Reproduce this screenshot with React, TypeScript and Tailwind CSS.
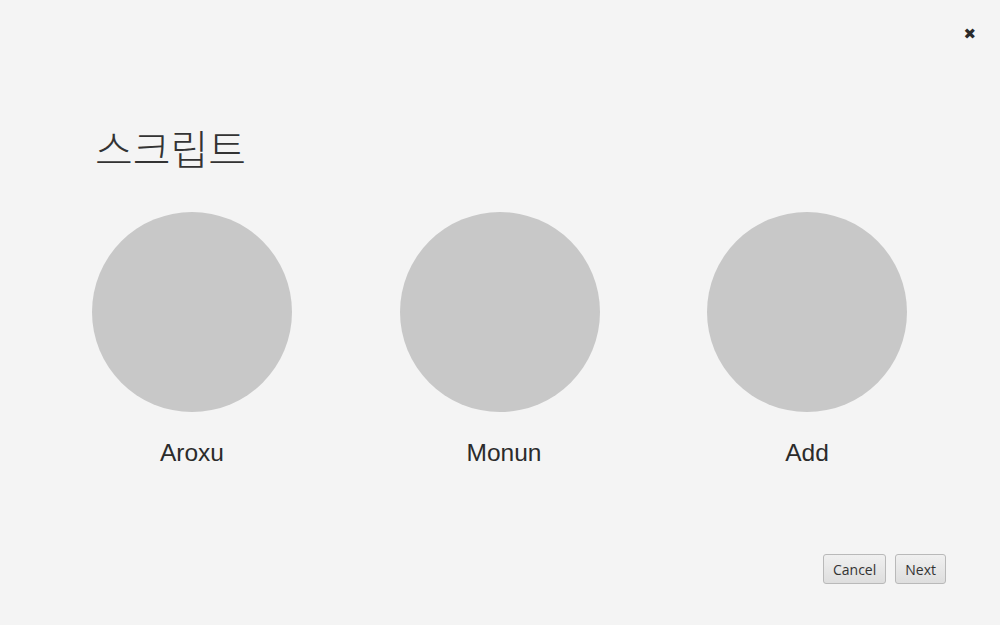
import React from "react";

const items = [
  { name: "Aroxu", shift: "" },
  { name: "Monun", shift: "pl-[9px]" },
  { name: "Add", shift: "" },
];

export default function App() {
  return (
    <div className="relative h-[625px] w-full bg-[#f4f4f4] overflow-hidden font-['Liberation_Sans',sans-serif]">
      <button className="absolute right-[24px] top-[27px] text-[15px] leading-none text-[#2a2a2a] font-['DejaVu_Sans',sans-serif]">
        ✖
      </button>

      <div className="flex flex-col px-[92px] pt-[121px]">
        <h1 className="pl-[3px] text-[41px] font-light leading-[53px] text-[#333] font-['Noto_Sans_CJK_KR',sans-serif]">
          스크립트
        </h1>

        <div className="mt-[38px] flex justify-between pr-[1px]">
          {items.map((it) => (
            <div key={it.name} className="flex w-[200px] flex-col items-center">
              <div className="h-[200px] w-[200px] rounded-full bg-[#c8c8c8]" />
              <div className={`mt-[26px] text-[24.5px] leading-[30px] text-[#2b2b2b] ${it.shift}`}>
                {it.name}
              </div>
            </div>
          ))}
        </div>
      </div>

      <div className="absolute bottom-[41px] right-[54px] flex gap-[9px] font-['Open_Sans',sans-serif]">
        <button className="h-[30px] rounded-[3px] border border-[#b9b9b9] bg-gradient-to-b from-[#f0f0f0] to-[#dedede] px-[9px] text-[14px] text-[#333]">
          Cancel
        </button>
        <button className="h-[30px] rounded-[3px] border border-[#b9b9b9] bg-gradient-to-b from-[#f0f0f0] to-[#dedede] px-[9px] text-[14px] text-[#333]">
          Next
        </button>
      </div>
    </div>
  );
}
